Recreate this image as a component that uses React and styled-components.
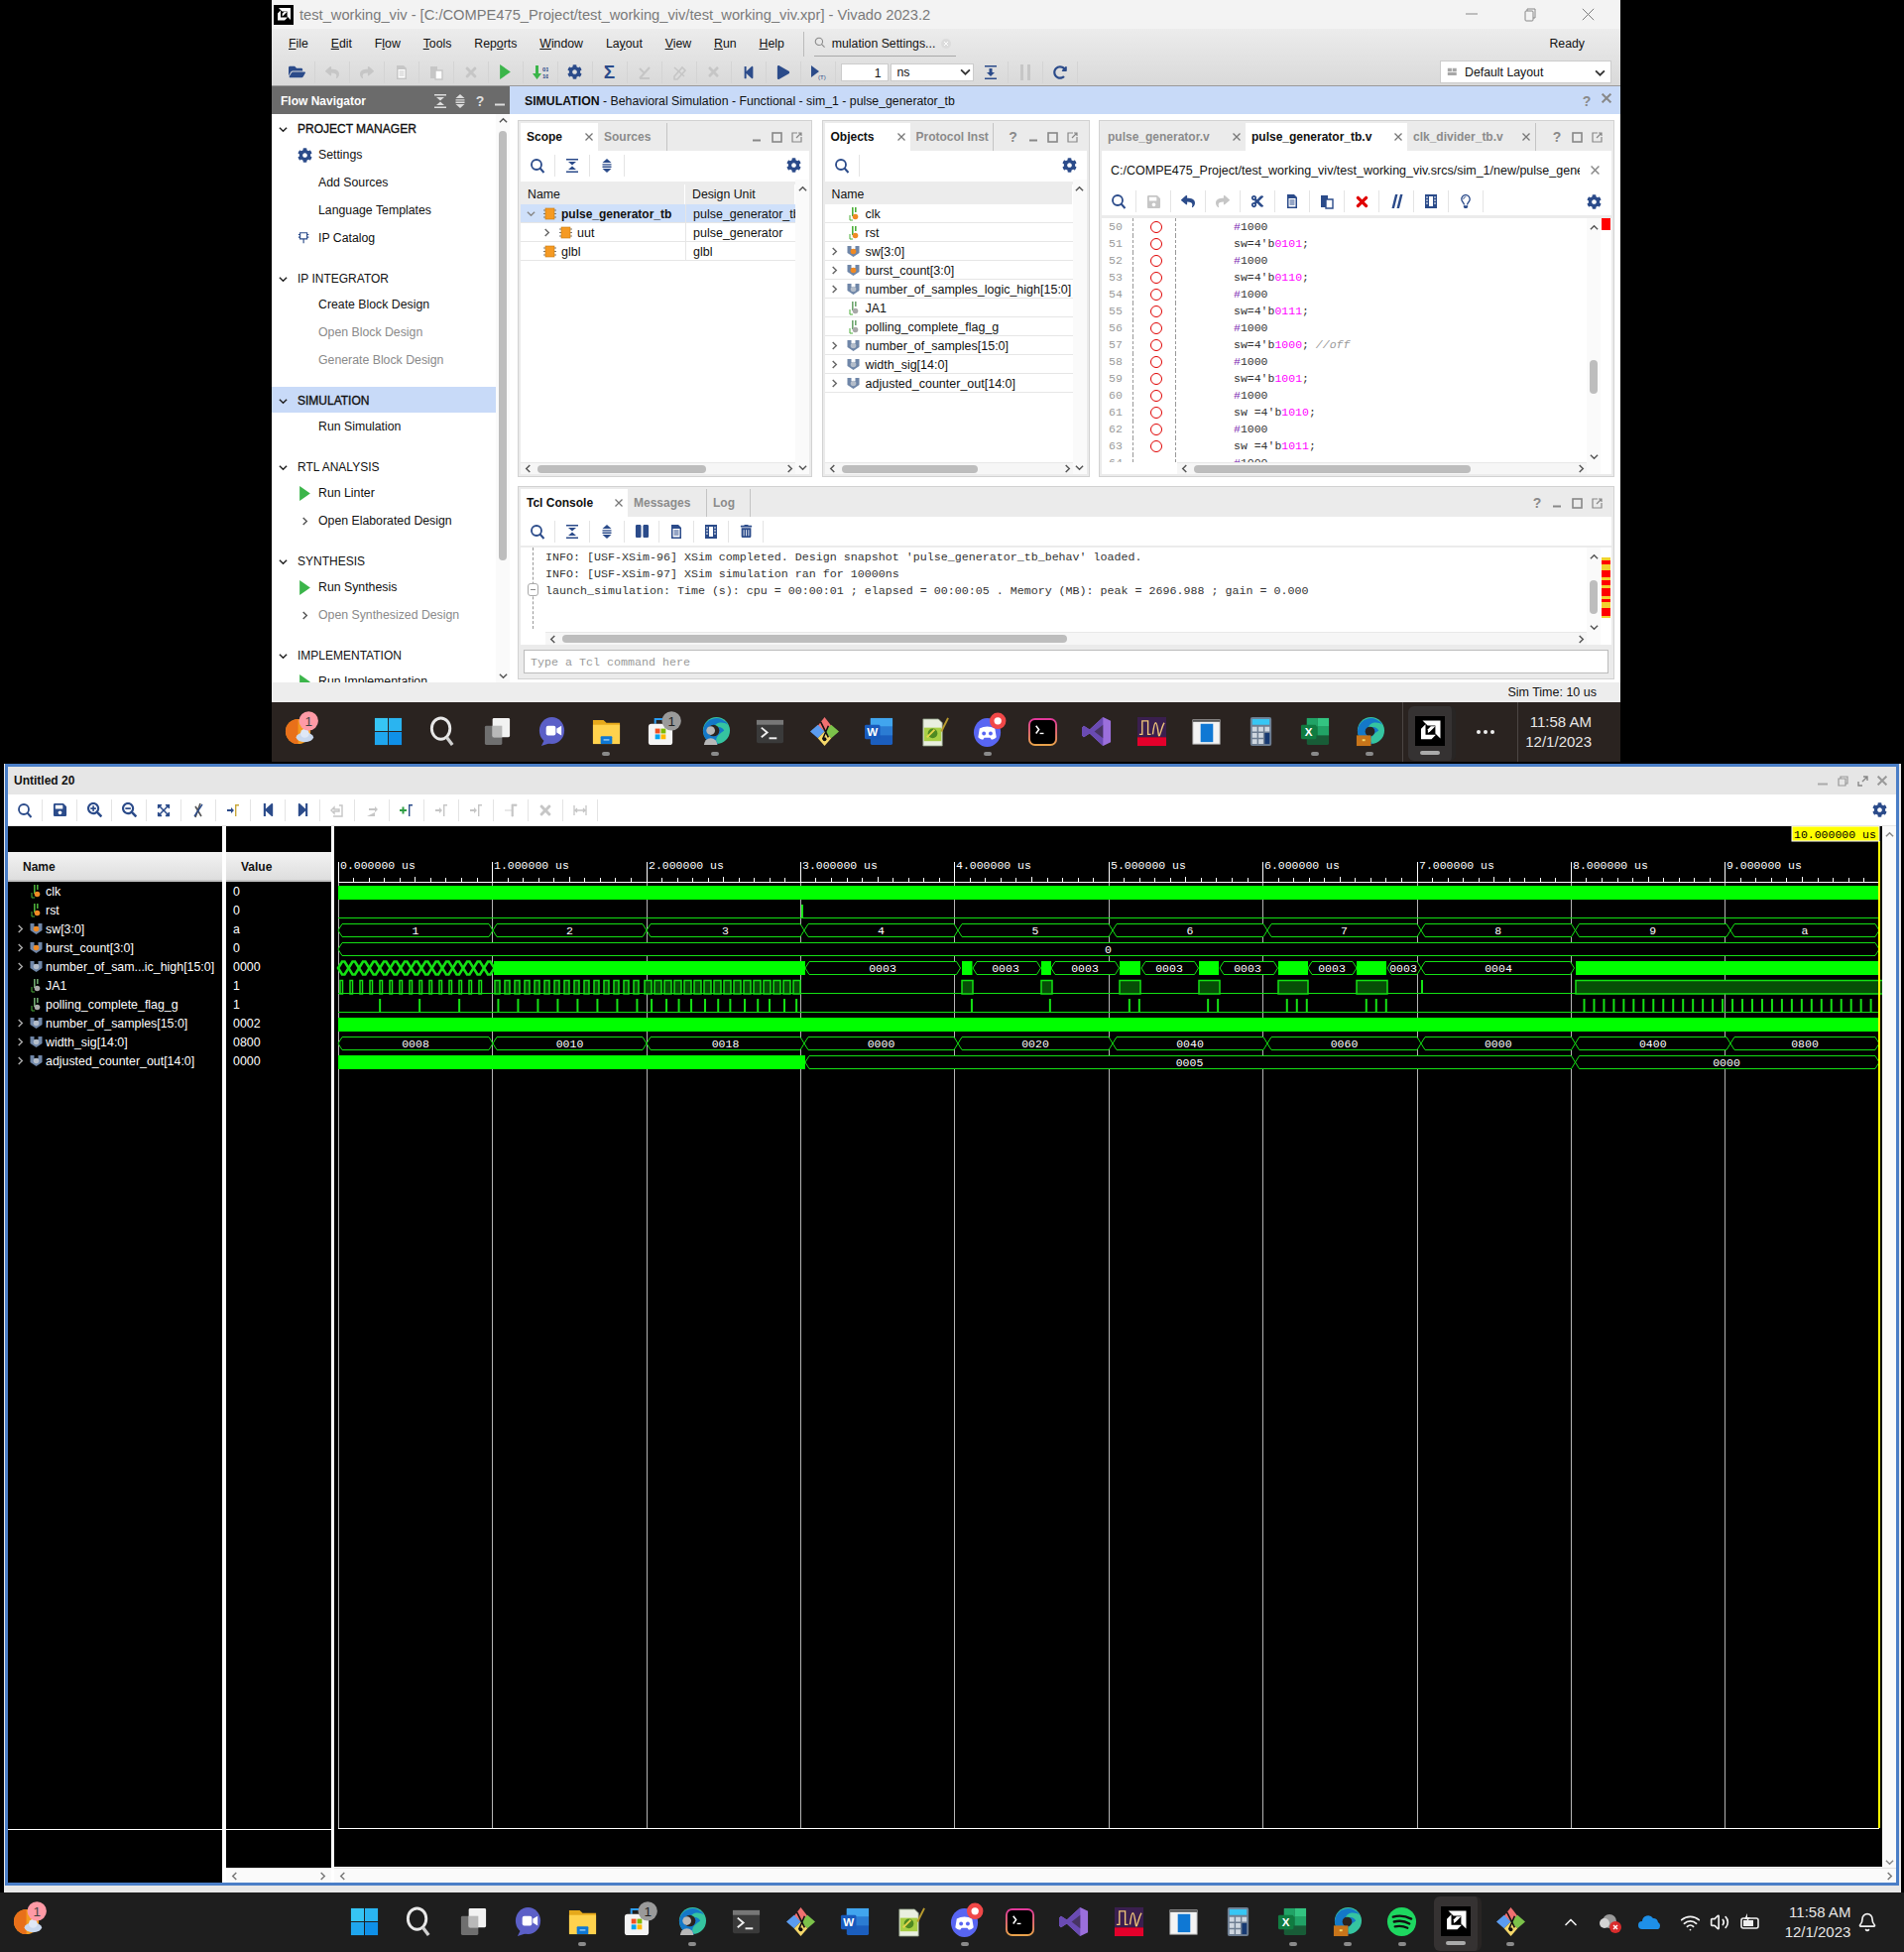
import React from "react";
import styled, { createGlobalStyle } from "styled-components";
import {
  FaCog, FaReply, FaShare, FaTimes, FaCut, FaSave, FaStepBackward, FaStepForward, FaPlay, FaPause,
  FaRedoAlt, FaTrashAlt, FaRegLightbulb, FaSearchPlus, FaSearchMinus, FaExpandArrowsAlt, FaFolderOpen,
} from "react-icons/fa";
import { ChevronUp, Wifi, Volume2, Bell } from "lucide-react";

const NAVY = "#2b4b8a";
const DIS = "#c6c6c6";
const UI = '"Liberation Sans", Arial, sans-serif';
const MONO = '"Liberation Mono", monospace';

const Global = createGlobalStyle`
  html, body { margin: 0; padding: 0; background: #000; }
  body { width: 1920px; height: 1968px; overflow: hidden; font-family: ${UI}; font-size: 12.3px; color: #111; }
  * { box-sizing: border-box; }
`;

const Page = styled.div`
  width: 1920px;
  height: 1968px;
  background: #000;
  display: flex;
  flex-direction: column;
`;

/* ---------- top window ---------- */
const TopWindow = styled.div`
  margin-left: 274px;
  width: 1360px;
  height: 708px;
  background: #ededed;
  display: flex;
  flex-direction: column;
`;
const TitleBar = styled.div`
  height: 29px;
  background: #f3f3f3;
  display: flex;
  align-items: center;
  padding-left: 2px;
`;
const TitleText = styled.span`
  margin-left: 6px;
  color: #7a7a7a;
  font-size: 14.7px;
  white-space: nowrap;
`;
const WinControls = styled.div`
  margin-left: auto;
  display: flex;
  padding-right: 3px;
  color: #777;
`;
const WinBtn = styled.span`
  width: 59px;
  display: flex;
  justify-content: center;
`;
const ChromeArea = styled.div`
  height: 58px;
  background: linear-gradient(#ececec, #d9d9d9);
  border-bottom: 1px solid #9a9a9a;
`;
const MenuRow = styled.div`
  height: 30px;
  display: flex;
  align-items: center;
  padding-left: 17px;
`;
const MenuItem = styled.span`
  margin-right: 22.9px;
  white-space: nowrap;
`;
const QuickSearch = styled.div`
  margin-left: -4px;
  width: 154px;
  height: 25px;
  border-left: 1px solid #bbb;
  padding-left: 10px;
  display: flex;
  align-items: center;
  justify-content: space-between;
`;
const QuickInner = styled.div`
  width: 143px;
  height: 25px;
  border-bottom: 1px solid #a9a9a9;
  display: flex;
  align-items: center;
  gap: 5px;
  white-space: nowrap;
`;
const ReadyText = styled.span`
  margin-left: auto;
  padding-right: 36px;
`;
const ToolRow = styled.div`
  height: 27px;
  display: flex;
  align-items: center;
  padding-left: 8.5px;
`;
const ToolCell = styled.span`
  width: 35px;
  height: 22px;
  flex: none;
  display: flex;
  align-items: center;
  justify-content: center;
  border-right: ${(p) => (p.$sep === false ? "none" : `1px solid ${p.$line || "#e4e4e4"}`)};
`;
const StepInput = styled.div`
  width: 48px;
  height: 18px;
  margin-left: 5px;
  background: #fff;
  border: 1px solid #ccc;
  text-align: right;
  padding: 2px 6px 0 0;
`;
const UnitSelect = styled.div`
  width: 84px;
  height: 18px;
  margin-left: 2px;
  background: #fff;
  border: 1px solid #ccc;
  display: flex;
  align-items: center;
  justify-content: space-between;
  padding: 0 2px 0 6px;
`;
const LayoutSelect = styled.div`
  margin-left: auto;
  margin-right: 9px;
  width: 173px;
  height: 23px;
  background: #fff;
  border: 1px solid #ccc;
  display: flex;
  align-items: center;
  gap: 5px;
  padding: 1px 5px 0 6px;
`;
const BodyRow = styled.div`
  flex: 1;
  display: flex;
  min-height: 0;
`;

/* flow navigator */
const FlowNav = styled.div`
  width: 240px;
  flex: none;
  display: flex;
  flex-direction: column;
  background: #fff;
`;
const GreyHeader = styled.div`
  height: 28px;
  flex: none;
  background: #6b6b6b;
  color: #fff;
  font-weight: 700;
  font-size: 12px;
  display: flex;
  align-items: center;
  padding: 2px 0 0 9px;
`;
const HeaderTools = styled.div`
  margin-left: auto;
  display: flex;
  color: #ddd;
  font-size: 14px;
`;
const HeaderTool = styled.span`
  width: 20px;
  display: flex;
  justify-content: center;
  align-items: center;
`;
const NavBody = styled.div`
  flex: 1;
  display: flex;
  min-height: 0;
`;
const NavList = styled.div`
  flex: 1;
  overflow: hidden;
  padding-top: 1px;
`;
const NavSection = styled.div`
  margin-bottom: 13px;
`;
const NavHead = styled.div`
  height: 26px;
  padding-top: 2px;
  display: flex;
  align-items: center;
  background: ${(p) => (p.$active ? "#c8daf8" : "transparent")};
  font-size: 12px;
  -webkit-text-stroke: ${(p) => (p.$bold ? "0.35px #111" : "0")};
  white-space: nowrap;
`;
const NavChev = styled.span`
  width: 22px;
  display: flex;
  justify-content: center;
  margin-right: 4px;
`;
const NavItem = styled.div`
  height: 28px;
  display: flex;
  align-items: center;
  padding-left: 24px;
  color: ${(p) => (p.$off ? "#8a8a8a" : "#111")};
  white-space: nowrap;
`;
const NavIcon = styled.span`
  width: 18px;
  margin-right: 5px;
  display: flex;
  justify-content: center;
`;
const VStrip = styled.div`
  width: ${(p) => p.$w || 14}px;
  flex: none;
  position: relative;
  background: ${(p) => p.$bg || "#fafafa"};
  display: flex;
  flex-direction: column;
  justify-content: space-between;
  align-items: center;
  padding: ${(p) => p.$pad || "2px 0"};
`;
const Thumb = styled.div`
  position: absolute;
  left: 3px;
  width: 8px;
  border-radius: 4px;
  background: #bdbdbd;
  top: ${(p) => p.$top}px;
  height: ${(p) => p.$h}px;
`;

/* main pane */
const MainPane = styled.div`
  flex: 1;
  min-width: 0;
  display: flex;
  flex-direction: column;
  background: #fff;
`;
const BlueHeader = styled.div`
  height: 28px;
  flex: none;
  background: #c8daf8;
  display: flex;
  align-items: center;
  padding: 2px 0 0 15px;
  white-space: nowrap;
`;
const HeaderRight = styled.div`
  margin-left: auto;
  padding-right: 4px;
  display: flex;
  color: #7a7a7a;
  font-weight: 700;
  font-size: 15px;
`;
const Panes = styled.div`
  flex: 1;
  display: grid;
  grid-template-columns: 297px 270px 520px;
  grid-template-rows: 360px 195px;
  column-gap: 9.5px;
  row-gap: 9px;
  padding: 6px 6px 3px 8px;
`;
const Panel = styled.div`
  min-width: 0;
  min-height: 0;
  grid-column: ${(p) => p.$span || "auto"};
  display: flex;
  flex-direction: column;
  background: #ebebeb;
  border: 1px solid #d2d2d2;
  padding: 2px;
  overflow: hidden;
`;
const TabStrip = styled.div`
  height: 28px;
  flex: none;
  display: flex;
  background: #ebebeb;
`;
const Tab = styled.div`
  width: ${(p) => p.$w}px;
  flex: none;
  height: 28px;
  display: flex;
  align-items: center;
  justify-content: space-between;
  padding: 0 5px 0 6px;
  font-weight: 700;
  font-size: 12px;
  white-space: nowrap;
  overflow: hidden;
  background: ${(p) => (p.$active ? "#fff" : "#ebebeb")};
  color: ${(p) => (p.$active ? "#111" : "#8b8b8b")};
  border-right: ${(p) => (p.$sep ? "1px solid #c4c4c4" : "none")};
`;
const TabTools = styled.div`
  margin-left: auto;
  display: flex;
  align-items: center;
  padding-right: ${(p) => p.$pr || 4}px;
`;
const TabTool = styled.span`
  width: 20px;
  display: flex;
  justify-content: center;
  color: #8a8a8a;
  font-weight: 700;
  font-size: 14px;
`;
const PanelTools = styled.div`
  height: ${(p) => p.$h || 29}px;
  flex: none;
  background: #fff;
  display: flex;
  align-items: center;
  padding-right: ${(p) => p.$pr || 8}px;
  border-bottom: ${(p) => p.$bb || 0}px solid #ebebeb;
`;
const RightGear = styled.span`
  margin-left: auto;
  display: flex;
`;
const PanelBody = styled.div`
  flex: 1;
  min-height: 0;
  display: flex;
  background: #fff;
`;
const TableCol = styled.div`
  flex: 1;
  min-width: 0;
  display: flex;
  flex-direction: column;
`;
const TreeArea = styled.div`
  flex: 1;
  min-height: 0;
  margin-top: 2px;
  overflow: hidden;
`;
const TreeHead = styled.div`
  height: 23px;
  background: #ececec;
  display: grid;
  grid-template-columns: ${(p) => p.$cols};
  align-items: center;
  padding-top: 3px;
  white-space: nowrap;
`;
const HeadCell = styled.span`
  padding-left: 7px;
  height: 100%;
  display: flex;
  align-items: center;
  border-right: 1px solid #fff;
`;
const TreeRow = styled.div`
  height: 19px;
  display: grid;
  grid-template-columns: ${(p) => p.$cols};
  background: ${(p) => (p.$sel ? "#cfe0fa" : "#fff")};
  border-bottom: 1px solid #e6e6e6;
  font-size: 12.5px;
  white-space: nowrap;
  overflow: hidden;
`;
const NameCell = styled.div`
  display: flex;
  align-items: center;
  padding: 1px 0 0 ${(p) => p.$indent || 0}px;
  font-weight: ${(p) => (p.$bold ? 700 : 400)};
  font-size: ${(p) => (p.$bold ? "12px" : "inherit")};
  overflow: hidden;
`;
const ValueCell = styled.div`
  display: flex;
  align-items: center;
  padding: 1px 0 0 7px;
  border-left: 1px solid #e6e6e6;
  overflow: hidden;
`;
const Chev = styled.span`
  width: 20px;
  flex: none;
  display: flex;
  justify-content: center;
`;
const TreeIcon = styled.span`
  width: 14px;
  margin: 0 5px 0 2px;
  flex: none;
  display: flex;
  justify-content: center;
`;
const HScroll = styled.div`
  height: ${(p) => p.$h || 12}px;
  flex: none;
  margin-left: ${(p) => p.$ml || 0}px;
  background: #f6f6f6;
  border-top: 1px solid #e8e8e8;
  display: flex;
  align-items: center;
  padding: 0 1px 0 3px;
`;
const HThumb = styled.div`
  height: 8px;
  width: ${(p) => p.$w}px;
  margin-left: ${(p) => p.$ml}px;
  background: #bdbdbd;
  border-radius: 4px;
`;
const PushRight = styled.span`
  margin-left: auto;
  display: flex;
`;

/* editor */
const PathRow = styled.div`
  height: 37px;
  flex: none;
  background: #fff;
  display: flex;
  align-items: center;
  padding: 2px 12px 0 9px;
`;
const PathText = styled.span`
  flex: 1;
  overflow: hidden;
  white-space: nowrap;
  font-size: 12.5px;
  margin-right: 11px;
`;
const CodeArea = styled.div`
  flex: 1;
  min-height: 0;
  overflow: hidden;
  font-family: ${MONO};
  font-size: 11.5px;
  color: #333;
`;
const CodeLine = styled.div`
  height: 17px;
  display: grid;
  grid-template-columns: 31px 44px 58px 1fr;
  align-items: stretch;
  white-space: pre;
`;
const LineNo = styled.span`
  padding-left: 7px;
  color: #9a9a9a;
  line-height: 18px;
`;
const BreakCol = styled.span`
  border-left: 1px dashed #999;
  border-right: 1px dashed #999;
  display: flex;
  align-items: center;
  justify-content: center;
  padding-left: 4px;
`;
const BreakDot = styled.i`
  width: 12px;
  height: 12px;
  border: 1px solid #e00000;
  border-radius: 50%;
  display: block;
`;
const CodeText = styled.span`
  grid-column: 4;
  line-height: 18px;
`;
const Hash = styled.span`color: #7a1fb0;`;
const Digits = styled.span`color: #ff00ff;`;
const Comment = styled.span`color: #999; font-style: italic;`;
const MarkerStrip = styled.div`
  width: 11px;
  flex: none;
  padding-top: ${(p) => p.$top}px;
  padding-left: 1px;
  padding-right: 1px;
`;
const Marker = styled.div`
  height: ${(p) => p.$h}px;
  background: ${(p) => p.$c};
`;

/* console */
const ConsoleLines = styled.div`
  flex: 1;
  min-height: 0;
  display: flex;
  font-family: ${MONO};
  font-size: 11.67px;
  color: #333;
`;
const FoldGutter = styled.div`
  width: 25px;
  flex: none;
  position: relative;
  &::before {
    content: "";
    position: absolute;
    left: 12px;
    top: 0;
    bottom: 3px;
    border-left: 1px dashed #999;
  }
`;
const FoldMark = styled.span`
  position: absolute;
  left: 7px;
  top: 36px;
  width: 11px;
  height: 13px;
  background: #fff;
  border: 1px solid #aaa;
  border-radius: 3px;
  &::after {
    content: "";
    position: absolute;
    left: 2px;
    right: 2px;
    top: 5px;
    border-top: 1px solid #888;
  }
`;
const ConsoleText = styled.div`
  padding-top: 2px;
`;
const ConsoleLine = styled.div`
  height: 17px;
  line-height: 17px;
  white-space: pre;
`;
const TclInput = styled.div`
  height: 24px;
  flex: none;
  margin: 5px 3px 3px 3px;
  background: #fff;
  border: 1px solid #bcbcbc;
  font-family: ${MONO};
  font-size: 11.67px;
  color: #999;
  line-height: 24px;
  padding-left: 6px;
`;
const StatusBar = styled.div`
  height: 20px;
  flex: none;
  background: #ededed;
  display: flex;
  align-items: center;
  justify-content: flex-end;
  padding-right: 24px;
  font-size: 12.5px;
`;

/* ---------- taskbars ---------- */
const Taskbar = styled.div`
  height: 60px;
  flex: none;
  display: flex;
  align-items: stretch;
  background: ${(p) => p.$bg};
  margin-left: ${(p) => p.$ml || 0}px;
  width: ${(p) => p.$width}px;
  color: #e6e6e6;
  position: relative;
`;
const TaskCell = styled.div`
  width: ${(p) => p.$w}px;
  margin-left: ${(p) => p.$ml || 0}px;
  flex: none;
  position: relative;
  display: flex;
  align-items: center;
  justify-content: center;
  padding-bottom: 1px;
`;
const RunDot = styled.i`
  position: absolute;
  left: 50%;
  bottom: 6px;
  width: ${(p) => p.$w || 8}px;
  height: 4px;
  margin-left: ${(p) => -(p.$w || 8) / 2}px;
  border-radius: 2px;
  background: ${(p) => p.$c || "#8a8a8a"};
`;
const ActiveCell = styled.div`
  width: 48px;
  margin: 4px 0 1px ${(p) => p.$ml}px;
  flex: none;
  position: relative;
  background: #353232;
  border-radius: 6px;
  border-right: 4px solid #282524;
  display: flex;
  align-items: center;
  justify-content: center;
  padding: 0 0 5px 0;
`;
const TaskSep = styled.div`
  width: 1px;
  background: #4b4644;
  margin-left: ${(p) => p.$ml || 0}px;
`;
const Clock = styled.div`
  flex: none;
  width: ${(p) => p.$w}px;
  padding: 0 ${(p) => p.$pr || 0}px 2px 0;
  display: flex;
  flex-direction: column;
  align-items: flex-end;
  justify-content: center;
  gap: 3px;
  font-size: 15px;
  line-height: 17px;
  white-space: nowrap;
`;

/* ---------- lower window ---------- */
const LowerFrame = styled.div`
  margin: 2px 0 0 4px;
  width: 1913px;
  height: 1138px;
  background: #e8e8e8;
  padding: 0 2px 7px 1px;
`;
const LowerWindow = styled.div`
  height: 100%;
  border: 3px solid #4a7ec7;
  display: flex;
  flex-direction: column;
  background: #fff;
`;
const WaveTitle = styled.div`
  height: 28px;
  flex: none;
  background: #e6e6e6;
  display: flex;
  align-items: center;
  padding-left: 6px;
  font-weight: 700;
  font-size: 12px;
`;
const WaveWinTools = styled.div`
  margin-left: auto;
  display: flex;
  padding-right: 4px;
`;
const WaveToolbar = styled.div`
  height: 32px;
  flex: none;
  background: #fff;
  border-bottom: 1px solid #e6e6e6;
  display: flex;
  align-items: center;
  padding-right: 9px;
`;
const WaveBody = styled.div`
  flex: 1;
  min-height: 0;
  display: flex;
  background: #fff;
`;
const SignalCol = styled.div`
  width: ${(p) => p.$w}px;
  margin-left: ${(p) => p.$ml || 0}px;
  flex: none;
  display: flex;
  flex-direction: column;
  background: #000;
  color: #fff;
`;
const ColGap = styled.div`
  height: 26px;
  flex: none;
`;
const ColHead = styled.div`
  height: 30px;
  flex: none;
  background: linear-gradient(#f2f2f2, #dedede);
  border-bottom: 2px solid #c4c4c4;
  color: #111;
  font-weight: 700;
  font-size: 12px;
  display: flex;
  align-items: center;
  padding: 2px 0 0 ${(p) => p.$pl}px;
`;
const ColRows = styled.div`
  flex: 1;
  border-bottom: 1px solid #fff;
`;
const SigRow = styled.div`
  height: 19px;
  display: flex;
  align-items: center;
  padding-left: 2px;
  font-size: 12.4px;
  white-space: nowrap;
`;
const SigIcon = styled.span`
  width: 14px;
  margin: 0 3px 0 -1px;
  display: flex;
  justify-content: center;
`;
const ValRow = styled.div`
  height: 19px;
  line-height: 20px;
  padding-left: 7px;
  font-size: 12.4px;
`;
const ColFoot = styled.div`
  height: ${(p) => p.$h}px;
  flex: none;
`;
const ColScroll = styled.div`
  height: 15px;
  flex: none;
  background: #fafafa;
  border-top: 1px solid #e4e4e4;
  display: flex;
  align-items: center;
  justify-content: space-between;
  padding: 0 4px;
`;
const WaveCol = styled.div`
  flex: 1;
  min-width: 0;
  margin-left: 3px;
  display: flex;
  flex-direction: column;
`;
const WaveMain = styled.div`
  flex: 1;
  min-height: 0;
  display: flex;
`;
const WaveSvg = styled.svg`
  flex: none;
  display: block;
  background: #000;
`;
const WaveScroll = styled.div`
  height: 15px;
  flex: none;
  background: #fafafa;
  border-top: 1px solid #e4e4e4;
  display: flex;
  align-items: center;
  justify-content: space-between;
  padding: 0 2px 0 4px;
`;

/* ---------- tray ---------- */
const TrayCell = styled.div`
  width: ${(p) => p.$w}px;
  margin-left: ${(p) => p.$ml || 0}px;
  flex: none;
  display: flex;
  align-items: center;
  justify-content: center;
  color: #f0f0f0;
`;

/* ---------- small glyph helpers ---------- */
const Arrow = ({ dir = "right", c = "#555", s = 9 }) => {
  const d = { right: "M3 1l4 4-4 4", left: "M7 1L3 5l4 4", up: "M1 7l4-4 4 4", down: "M1 3l4 4 4-4" }[dir];
  return (
    <svg width={s} height={s} viewBox="0 0 10 10"><path d={d} fill="none" stroke={c} strokeWidth="1.6" /></svg>
  );
};
const X = ({ c = "#777", s = 8, w = 1.3 }) => (
  <svg width={s} height={s} viewBox="0 0 8 8"><path d="M.5.5l7 7M7.5.5l-7 7" stroke={c} strokeWidth={w} /></svg>
);
const Ic = ({ children, s = 16 }) => <svg width={s} height={s} viewBox="0 0 16 16">{children}</svg>;

const SearchIc = () => (
  <Ic>
    <circle cx="7" cy="7" r="5" fill="none" stroke={NAVY} strokeWidth="1.8" />
    <path d="M10.5 10.5l4 4.5" stroke={NAVY} strokeWidth="2" />
  </Ic>
);
const CollapseIc = ({ c = NAVY }) => (
  <Ic><path fill={c} d="M2 1h12v1.4H2zM4 4h8L8 7.6zM8 8.4L12 12H4zM2 13.6h12V15H2z" /></Ic>
);
const ExpandIc = ({ c = NAVY }) => (
  <Ic><path fill={c} d="M8 1l4.5 4h-9zM3.5 6.2h9v1.4h-9zM3.5 8.6h9V10h-9zM3.5 11h9L8 15z" /></Ic>
);
const DocIc = ({ c = NAVY }) => (
  <Ic>
    <path d="M3 1h7l3 3v11H3z" fill={c} />
    <path d="M4.5 5h7v8.5h-7z" fill="#fff" />
    <path d="M5.5 7h5M5.5 9h5M5.5 11h5" stroke={c} strokeWidth="1" />
  </Ic>
);
const PasteIc = ({ c = NAVY }) => (
  <Ic>
    <path d="M2 2h7v12H2z" fill={c} />
    <path d="M7 6h7v9H7z" fill="#fff" stroke={c} strokeWidth="1.4" />
  </Ic>
);
const ColumnsIc = () => (
  <Ic>
    <path d="M2 1h12v14H2z" fill={NAVY} />
    <path d="M6 3h4v10H6z" fill="#fff" />
    <path d="M3 4h2M3 7h2M3 10h2M11 4h2M11 7h2M11 10h2" stroke="#fff" strokeWidth="1" />
  </Ic>
);
const SlashIc = () => (
  <Ic><path d="M7 1h2.5L6 15H3.5zM12 1h2.5L11 15H8.5z" fill={NAVY} /></Ic>
);
const Play = ({ c = "#3bb54a", s = 14 }) => (
  <svg width={s} height={s} viewBox="0 0 12 14"><path d="M1 0l10 7-10 7z" fill={c} /></svg>
);
const Gear = () => <FaCog size={15} color={NAVY} />;
const BarMark = ({ c = NAVY, dis }) => (
  <Ic>
    <path d="M10 2h4v1.4h-2.6V14H10z" fill={dis ? DIS : "#c9a83a"} />
    <path d="M2 7h4V5l3 3-3 3V9H2z" fill={dis ? DIS : c} />
  </Ic>
);
const TabIcons = ({ help = true, min = true }) => (
  <>
    {help && <TabTool>?</TabTool>}
    {min && <TabTool><svg width="12" height="10"><path d="M2 8.5h8" stroke="#888" strokeWidth="2" /></svg></TabTool>}
    <TabTool><svg width="11" height="11"><rect x="1" y="1" width="9" height="9" fill="none" stroke="#888" strokeWidth="1.6" /></svg></TabTool>
    <TabTool><svg width="11" height="11"><path d="M6 1H1v9h9V5M5 6l5-5M7 1h3v3" fill="none" stroke="#888" strokeWidth="1.2" /></svg></TabTool>
  </>
);

const ModuleIc = () => (
  <svg width="13" height="13" viewBox="0 0 13 13">
    <path d="M0 3h13M0 6.5h13M0 10h13" stroke="#777" strokeWidth="1" />
    <rect x="2" y="1" width="9" height="11" fill="#f59a23" stroke="#c77a10" strokeWidth=".6" />
  </svg>
);
const SigIc = ({ bus, grey }) =>
  bus ? (
    <svg width="13" height="13" viewBox="0 0 12 13">
      <path d="M0 1h4v3h4V1h4v7l-6 4-6-4z" fill="#6f86a8" />
      <circle cx="6" cy="6.5" r="2.8" fill={grey ? "#b4bdca" : "#f08a24"} />
    </svg>
  ) : (
    <svg width="12" height="14" viewBox="0 0 12 14">
      <path d="M4 0h1.6v9H4zM7 0h1.6v5H7z" fill={grey ? "#6ea66e" : "#4caf3a"} />
      <path d="M2 8v5h3" fill="none" stroke="#4caf3a" strokeWidth="1" />
      <circle cx="7.5" cy="9.5" r="2.8" fill={grey ? "#a9a9a9" : "#f08a24"} />
    </svg>
  );

/* ---------- taskbar icons ---------- */
const AmdLogo = ({ s = 30 }) => (
  <svg width={s} height={s} viewBox="0 0 20 20">
    <rect width="20" height="20" fill="#000" />
    <path fill="#fff" d="M5 3h12v12l-3.4-3.4V6.4H8.4zM4 8.5l3-3v7h7l-3 3H4z" />
    <path fill="#fff" d="M8.6 11.4V8.8l2-2h3l-3.5 3.5z" />
  </svg>
);
const Badge = ({ c, x, n, tc = "#444" }) => (
  <>
    <circle cx={x} cy="5" r="10" fill={c} />
    <text x={x} y="10" textAnchor="middle" fontSize="14" fill={tc} fontFamily="Liberation Sans">{n}</text>
  </>
);
const TaskIcon = ({ name }) => {
  const body = {
    weather: (
      <>
        <circle cx="14" cy="16" r="13" fill="#f49a1f" />
        <path d="M14 3a13 13 0 0 0 0 26z" fill="#e8701a" />
        <ellipse cx="21" cy="22" rx="9" ry="5" fill="#c9d8ee" />
        <circle cx="21" cy="18" r="4.5" fill="#dfe8f6" />
        <Badge c="#ff9aa6" x={25} n="1" />
      </>
    ),
    windows: (
      <>
        <rect x="2" y="2" width="13.5" height="13.5" fill="#36c5f4" />
        <rect x="16.5" y="2" width="13.5" height="13.5" fill="#2ab4f0" />
        <rect x="2" y="16.5" width="13.5" height="13.5" fill="#1fa6ee" />
        <rect x="16.5" y="16.5" width="13.5" height="13.5" fill="#0f90e8" />
      </>
    ),
    search: (
      <>
        <ellipse cx="14" cy="13" rx="9.5" ry="11" fill="none" stroke="#e8e8e8" strokeWidth="3" />
        <path d="M20 22l6 8" stroke="#cfcfcf" strokeWidth="3.4" />
      </>
    ),
    taskview: (
      <>
        <rect x="3" y="10" width="18" height="20" rx="1.5" fill="#6f6f6f" />
        <rect x="11" y="2" width="18" height="20" rx="1.5" fill="#f2f2f2" />
        <rect x="11" y="10" width="10" height="12" fill="#b9b9b9" />
      </>
    ),
    teams: (
      <>
        <ellipse cx="16" cy="15" rx="13" ry="14" fill="#5b5fc7" />
        <path d="M8 25l-3 6 9-3z" fill="#5b5fc7" />
        <rect x="10" y="10" width="10" height="10" rx="2" fill="#fff" />
        <path d="M21 13l5-3v10l-5-3z" fill="#fff" />
      </>
    ),
    explorer: (
      <>
        <path d="M2 4h11l3 3h14v21H2z" fill="#e6a91b" />
        <rect x="2" y="9" width="28" height="20" fill="#ffd24d" />
        <rect x="10" y="21" width="12" height="8" rx="1" fill="#0f78d4" />
        <rect x="13" y="24" width="6" height="1.4" fill="#9fd0f7" />
      </>
    ),
    store: (
      <>
        <path d="M10 8V3h11v5" fill="none" stroke="#2a9df4" strokeWidth="2" />
        <rect x="3" y="8" width="25" height="22" rx="3" fill="#f4f4f4" />
        <rect x="10" y="13" width="5" height="5" fill="#f25022" />
        <rect x="16" y="13" width="5" height="5" fill="#7fba00" />
        <rect x="10" y="19" width="5" height="5" fill="#00a4ef" />
        <rect x="16" y="19" width="5" height="5" fill="#ffb900" />
        <Badge c="#9a9a9a" x={27} n="1" tc="#222" />
      </>
    ),
    edge: (
      <>
        <circle cx="17" cy="15" r="14" fill="#35c4a0" />
        <path d="M3 15a14 14 0 0 1 26-6c-5-4-14-3-15 4 5-3 9-2 11 2-4 3-12 8-6 14A14 14 0 0 1 3 15z" fill="#1478c8" />
        <circle cx="14" cy="15" r="6" fill="#2a2320" />
        <circle cx="11" cy="15" r="4.5" fill="#b8b8b8" />
        <path d="M4 30a7 7 0 0 1 14 0z" fill="#b8b8b8" />
      </>
    ),
    terminal: (
      <>
        <rect x="2" y="4" width="28" height="24" rx="2" fill="#3a3a3a" />
        <rect x="2" y="4" width="28" height="5" fill="#777" />
        <path d="M7 12l6 5-6 5" fill="none" stroke="#eee" strokeWidth="2" />
        <path d="M15 23h8" stroke="#eee" strokeWidth="2" />
      </>
    ),
    git: (
      <>
        <path d="M16 1L9 10l7 6 7-6z" fill="#f07070" />
        <path d="M1 16l8-7 7 7-7 7z" fill="#5b9cf0" />
        <path d="M31 16l-8-7-7 7 7 7z" fill="#7cc24a" />
        <path d="M16 31l-7-8 7-7 7 7z" fill="#f4d76a" />
        <path d="M12 6l8 16M20 10l-6 14" stroke="#111" strokeWidth="1.6" />
        <circle cx="16" cy="24" r="2" fill="#111" />
      </>
    ),
    word: (
      <>
        <rect x="7" y="2" width="23" height="28" rx="1.5" fill="#1b5ebe" />
        <rect x="7" y="2" width="23" height="9" fill="#41a5ee" />
        <rect x="7" y="11" width="23" height="9" fill="#2b7cd3" />
        <rect x="1" y="9" width="16" height="15" rx="1.5" fill="#185abd" />
        <text x="9" y="21" textAnchor="middle" fontSize="12" fontWeight="700" fill="#fff" fontFamily="Liberation Sans">W</text>
      </>
    ),
    notepad: (
      <>
        <path d="M5 3h16l4 4v24H5z" fill="#e9efe0" stroke="#8a9a80" strokeWidth=".8" />
        <path d="M6 12h18v14H6z" fill="#a8cf45" />
        <circle cx="15" cy="18" r="5" fill="#4f8a22" />
        <path d="M9 22l8-8" stroke="#e7d44a" strokeWidth="2" />
        <path d="M24 16L31 2" stroke="#b89b2e" strokeWidth="2" />
      </>
    ),
    discord: (
      <>
        <ellipse cx="15" cy="17" rx="14" ry="15" fill="#5865f2" />
        <path d="M7 13c5-3 11-3 16 0l1.5 9c-2 2-4 2.5-5 2.5l-1.5-2h-6l-1.5 2c-1 0-3-.5-5-2.5z" fill="#fff" />
        <circle cx="11.5" cy="18" r="2" fill="#5865f2" />
        <circle cx="18.5" cy="18" r="2" fill="#5865f2" />
        <circle cx="26" cy="5" r="8.5" fill="#f04848" />
        <circle cx="26" cy="5" r="3.8" fill="#fff" />
      </>
    ),
    wt: (
      <>
        <rect x="2" y="3" width="28" height="27" rx="6" fill="#000" stroke="url(#wtg)" strokeWidth="2" />
        <defs>
          <linearGradient id="wtg" x1="0" y1="0" x2="0" y2="1">
            <stop offset="0" stopColor="#e0389a" />
            <stop offset="1" stopColor="#e8a24a" />
          </linearGradient>
        </defs>
        <path d="M9 10l3 4-3 4" fill="none" stroke="#fff" strokeWidth="1.6" />
        <path d="M13 18h4" stroke="#fff" strokeWidth="1.4" />
      </>
    ),
    vs: (
      <>
        <path d="M22 1l8 4v22l-8 4-14-13-6 4-2-2V12l2-2 6 4z" fill="#9b6fdc" />
        <path d="M22 1L8 14 2 10l-2 2v8l2 2 6-4 14 13z" fill="#6a4bb3" />
        <path d="M22 9v14l-9-7z" fill="#2a2320" opacity=".55" />
      </>
    ),
    ltspice: (
      <>
        <rect x="1" y="1" width="30" height="21" fill="#3a1f4f" />
        <rect x="1" y="22" width="30" height="9" fill="#e4002b" />
        <path d="M3 19h3V5h6v14h3" fill="none" stroke="#f2c77a" strokeWidth="1.4" />
        <path d="M17 19c2-16 4-16 6 0 1 6 3-8 6-12" fill="none" stroke="#f2c77a" strokeWidth="1.4" />
      </>
    ),
    window: (
      <>
        <rect x="2" y="4" width="28" height="25" fill="#f4f4f4" stroke="#bbb" />
        <rect x="10" y="8" width="13" height="19" fill="#0f78d4" />
        <rect x="2" y="4" width="28" height="2" fill="#555" />
      </>
    ),
    calc: (
      <>
        <rect x="5" y="1" width="22" height="30" rx="2" fill="#6f7f93" />
        <rect x="7" y="3" width="18" height="6" fill="#37c6f4" />
        <path fill="#cfd7e0" d="M7 11h5v5H7zM13.5 11h5v5h-5zM20 11h5v5h-5zM7 17.5h5v5H7zM13.5 17.5h5v5h-5zM7 24h5v5H7zM13.5 24h5v5h-5z" />
        <rect x="20" y="17.5" width="5" height="11.5" fill="#173a72" />
      </>
    ),
    excel: (
      <>
        <rect x="7" y="2" width="23" height="28" rx="1.5" fill="#185c37" />
        <rect x="18" y="2" width="12" height="9" fill="#33c481" />
        <rect x="7" y="2" width="11" height="9" fill="#21a366" />
        <rect x="18" y="11" width="12" height="9" fill="#21a366" />
        <rect x="7" y="11" width="11" height="9" fill="#107c41" />
        <rect x="1" y="9" width="16" height="15" rx="1.5" fill="#107c41" />
        <text x="9" y="21" textAnchor="middle" fontSize="12" fontWeight="700" fill="#fff" fontFamily="Liberation Sans">X</text>
      </>
    ),
    edgedev: (
      <>
        <circle cx="17" cy="15" r="14" fill="#35c4a0" />
        <path d="M3 15a14 14 0 0 1 26-6c-5-4-14-3-15 4 5-3 9-2 11 2-4 3-12 8-6 14A14 14 0 0 1 3 15z" fill="#1478c8" />
        <circle cx="16" cy="16" r="5" fill="#2a2320" />
        <rect x="2" y="20" width="15" height="11" fill="#c8751a" />
        <rect x="8" y="24" width="3" height="2" fill="#f4d76a" />
      </>
    ),
    spotify: (
      <>
        <circle cx="16" cy="16" r="15" fill="#1ed760" />
        <path d="M7 11c7-2 13-1 19 2M8 16c6-1.500 11-1 16 2M9 21c5-1 9-.5 13 1.500" fill="none" stroke="#111" strokeWidth="2.400" strokeLinecap="round" />
      </>
    ),
  }[name];
  return <svg width="31" height="31" viewBox="0 0 32 32" style={{ overflow: "visible" }}>{body}</svg>;
};

const TOP_APPS = [
  ["windows"], ["search"], ["taskview"], ["teams"], ["explorer", 1], ["store"], ["edge", 1], ["terminal"], ["git"], ["word"],
  ["notepad"], ["discord", 1], ["wt"], ["vs"], ["ltspice"], ["window"], ["calc"], ["excel", 1], ["edgedev", 1],
];
const BOTTOM_APPS = [...TOP_APPS, ["spotify", 1]];

const TaskApps = ({ apps, w }) =>
  apps.map(([name, run]) => (
    <TaskCell key={name} $w={w}>
      <TaskIcon name={name} />
      {run && <RunDot />}
    </TaskCell>
  ));

/* ---------- tool rows data ---------- */
const mainTools = [
  <FaFolderOpen key="f" size={17} color={NAVY} />,
  <FaReply key="u" size={14} color={DIS} />,
  <FaShare key="r" size={14} color={DIS} />,
  <DocIc key="c" c={DIS} />,
  <PasteIc key="p" c={DIS} />,
  <FaTimes key="x" size={16} color={DIS} />,
  <Play key="g" s={15} />,
  <svg width="16" height="16" viewBox="0 0 16 16" key="st">
    <path d="M3 1h3v8h3l-4.500 6L0 9h3z" fill="#3bb54a" />
    <text x="10" y="7" fontSize="6" fontWeight="700" fill={NAVY} fontFamily="Liberation Sans">01</text>
    <text x="10" y="14" fontSize="6" fontWeight="700" fill={NAVY} fontFamily="Liberation Sans">10</text>
  </svg>,
  <Gear key="gr" />,
  <span key="s" style={{ color: NAVY, fontSize: 19, fontWeight: 700, lineHeight: 1 }}>Σ</span>,
  <Ic key="d1"><path d="M3 14L13 3M3 4l4 4M3 14h10" stroke={DIS} strokeWidth="2" fill="none" /></Ic>,
  <Ic key="d2"><path d="M3 12l8-9 3 3-8 9H3zM13 12L3 3" stroke={DIS} strokeWidth="1.6" fill="none" /></Ic>,
  <FaTimes key="d3" size={15} color={DIS} />,
  <FaStepBackward key="pv" size={14} color={NAVY} />,
  <FaPlay key="pl" size={14} color={NAVY} />,
  <Ic key="pt"><path d="M1 1l8 6-8 6z" fill={NAVY} /><text x="8" y="15" fontSize="6" fill={NAVY} fontFamily="Liberation Sans">(T)</text></Ic>,
];
const waveTools = [
  <SearchIc key="s" />,
  <FaSave key="sv" size={15} color={NAVY} />,
  <FaSearchPlus key="zi" size={15} color={NAVY} />,
  <FaSearchMinus key="zo" size={15} color={NAVY} />,
  <FaExpandArrowsAlt key="fit" size={14} color={NAVY} />,
  <Ic key="cut"><path d="M10 1L5 15M5 4l6 10" stroke="#555" strokeWidth="1.6" fill="none" /><path d="M12 2L4 14" stroke={NAVY} strokeWidth="1.4" /></Ic>,
  <BarMark key="mk" />,
  <FaStepBackward key="pv" size={15} color={NAVY} />,
  <FaStepForward key="nx" size={15} color={NAVY} />,
  <Ic key="d1"><path d="M4 14h9V3h-3M2 8l3-3v2h5v2H5v2z" fill="none" stroke={DIS} strokeWidth="1.400" /></Ic>,
  <Ic key="d2"><path d="M3 14h8v-4M14 7l-3-3v2H5v2h6v2z" fill={DIS} /></Ic>,
  <Ic key="add"><path d="M10 2h4v1.400h-2.600V14H10z" fill={NAVY} /><path d="M1 8h7M4.500 4.500v7" stroke="#2f9e44" strokeWidth="2" /></Ic>,
  <BarMark key="d3" dis />,
  <BarMark key="d4" dis />,
  <Ic key="d5"><path d="M9 2h5v1.400H10.400V14H9zM2 8h7" fill={DIS} stroke={DIS} strokeWidth=".8" /></Ic>,
  <FaTimes key="d6" size={16} color={DIS} />,
  <Ic key="d7"><path d="M2 3v10M14 3v10M3 8h10M5 6L3 8l2 2M11 6l2 2-2 2" stroke={DIS} strokeWidth="1.300" fill="none" /></Ic>,
];

/* ---------- code data ---------- */
const code = [
  [50, "h"], [51, "s", "sw=4'b", "0101"], [52, "h"], [53, "s", "sw=4'b", "0110"], [54, "h"], [55, "s", "sw=4'b", "0111"], [56, "h"],
  [57, "s", "sw=4'b", "1000", " //off"], [58, "h"], [59, "s", "sw=4'b", "1001"], [60, "h"], [61, "s", "sw =4'b", "1010"], [62, "h"],
  [63, "s", "sw =4'b", "1011"], [64, "h"],
];
const scopeCols = "166px 1fr";
const objects = [
  ["clk", 0, 0], ["rst", 0, 0], ["sw[3:0]", 1, 0], ["burst_count[3:0]", 1, 0], ["number_of_samples_logic_high[15:0]", 1, 1],
  ["JA1", 0, 1], ["polling_complete_flag_g", 0, 1], ["number_of_samples[15:0]", 1, 1], ["width_sig[14:0]", 1, 1], ["adjusted_counter_out[14:0]", 1, 1],
];
const signals = [
  ["clk", 0, 0, "0"], ["rst", 0, 0, "0"], ["sw[3:0]", 1, 0, "a"], ["burst_count[3:0]", 1, 0, "0"], ["number_of_sam...ic_high[15:0]", 1, 1, "0000"],
  ["JA1", 0, 1, "1"], ["polling_complete_flag_g", 0, 1, "1"], ["number_of_samples[15:0]", 1, 1, "0002"], ["width_sig[14:0]", 1, 1, "0800"], ["adjusted_counter_out[14:0]", 1, 1, "0000"],
];
const navData = [
  { t: "PROJECT MANAGER", b: 1, items: [["Settings", "gear"], ["Add Sources"], ["Language Templates"], ["IP Catalog", "ip"]] },
  { t: "IP INTEGRATOR", items: [["Create Block Design"], ["Open Block Design", null, 1], ["Generate Block Design", null, 1]] },
  { t: "SIMULATION", b: 1, a: 1, items: [["Run Simulation"]] },
  { t: "RTL ANALYSIS", items: [["Run Linter", "play"], ["Open Elaborated Design", "chev"]] },
  { t: "SYNTHESIS", items: [["Run Synthesis", "play"], ["Open Synthesized Design", "chev", 1]] },
  { t: "IMPLEMENTATION", items: [["Run Implementation", "play"]] },
];
const navIcon = (k) =>
  k === "gear" ? <Gear /> : k === "play" ? <Play s={15} /> : k === "chev" ? <Arrow c="#555" /> : k === "ip" ? (
    <Ic s={14}><path d="M3 2h8v7H3zM7 9v5M1 4h2M1 7h2M11 4h2M11 7h2" fill="none" stroke={NAVY} strokeWidth="1.3" /></Ic>
  ) : null;

/* ---------- waveform ---------- */
const G = "#00ff00";
const GL = "#14e014";
const DARK = "#064f06";
const T0 = 340.7;
const US = 155.4;
const END = 1895;
const tx = (u) => Math.round(T0 + u * US);
const rowTop = (i) => 893 + 19 * i;
const B = [341, 497, 652, 811, 966, 1122, 1278, 1433, 1588.5, 1745, 1895];

const Bus = ({ i, a, b, label, lx, sw = 1 }) => {
  const t = rowTop(i) + 0.5;
  const bt = t + 13;
  const m = t + 6.5;
  const s = Math.min(4, (b - a) / 2);
  return (
    <>
      <path d={`M${a} ${m}L${a + s} ${t}H${b - s}L${b} ${m}L${b - s} ${bt}H${a + s}Z`} fill="#000" stroke={GL} strokeWidth={sw} />
      {label && <WaveText x={lx ?? (a + b) / 2} y={t + 10.5} anchor="middle">{label}</WaveText>}
    </>
  );
};
const Solid = ({ i, a, b }) => <rect x={a} y={rowTop(i)} width={b - a} height={14} fill={G} />;
const WaveText = ({ x, y, anchor = "start", fill = "#fff", children }) => (
  <text x={x} y={y} textAnchor={anchor} fill={fill} fontFamily='"Liberation Mono", monospace' fontSize="11.500" style={{ whiteSpace: "pre" }}>{children}</text>
);
const Pulse = ({ a, b, fill }) => {
  const t = rowTop(5) + 0.5;
  return <rect x={a} y={t} width={b - a} height={13.5} fill={fill || "none"} stroke={GL} strokeWidth={1.5} />;
};
const Tick = ({ x }) => <rect x={x} y={rowTop(6)} width={2} height={14} fill={GL} />;

const range = (n) => Array.from({ length: n }, (_, k) => k);
const pollZoom6 = [146, 258, 370, 480, 536, 592, 648, 704, 760, 816, 872, 913, 955, 990, 1025, 1064, 1101, 1135, 1176, 1213, 1246, 1288, 1322];
const pollZoom7 = [277, 498, 722, 750, 944, 972, 1167, 1195, 1223, 1391, 1419, 1447];
const pollTicks = [
  ...pollZoom6.map((v) => 330 + v / 2.8),
  ...pollZoom7.map((v) => 880 + v / 2.8),
  ...range(30).map((k) => 1596.5 + k * 9.97),
];
const nsBlocks = [
  ["b", 812, 968.5, "0003", 890], ["s", 970, 980.5], ["b", 981, 1049.5, "0003", 1014], ["s", 1050, 1060], ["b", 1060, 1128.5, "0003", 1094],
  ["s", 1129, 1150], ["b", 1151, 1208.5, "0003", 1179], ["s", 1209, 1229], ["b", 1230, 1288.5, "0003", 1258], ["s", 1289, 1319],
  ["b", 1319, 1368, "0003", 1343], ["s", 1368, 1398], ["b", 1399, 1433, "0003", 1415], ["b", 1433, 1587.5, "0004", 1511], ["s", 1589, END],
];

const WaveForm = () => (
  <WaveSvg width="1561" height="1049" viewBox="337 833 1561 1049">
    {/* grid */}
    {range(10).map((u) => (
      <g key={u} shapeRendering="crispEdges">
        <path d={`M${tx(u) + 0.5} 889V1843`} stroke="#b4b4b4" />
        <path d={`M${tx(u) + 0.5} 869V889`} stroke="#fff" />
        <WaveText x={tx(u) + 2} y={876}>{`${u}.000000 us`}</WaveText>
      </g>
    ))}
    <g shapeRendering="crispEdges">
      {range(100).map((k) =>
        k % 10 === 0 ? null : (
          <path key={k} d={`M${Math.round(T0 + k * 15.54) + 0.5} ${k % 5 === 0 ? 884 : 885}V889`} stroke="#fff" />
        )
      )}
      <path d={`M341 889.5H${END}`} stroke="#fff" />
      <path d={`M341 1843.5H${END}`} stroke="#fff" />
    </g>

    <Solid i={0} a={341} b={END} />

    <path d={`M341 925.5H${END}`} stroke={GL} shapeRendering="crispEdges" />
    <rect x={808} y={912} width={2} height={13} fill={GL} />

    {range(10).map((k) => (
      <Bus key={k} i={2} a={B[k]} b={B[k + 1]} label={"123456789a"[k]} />
    ))}
    <Bus i={3} a={341} b={END} label="0" lx={1117.5} />

    {range(15).map((k) => (
      <Bus key={k} i={4} a={341 + k * 10.5} b={351.5 + k * 10.5} sw={2.6} />
    ))}
    <Solid i={4} a={498} b={812} />
    {nsBlocks.map(([kind, a, b, label, lx]) =>
      kind === "s" ? <Solid key={a} i={4} a={a} b={b} /> : <Bus key={a} i={4} a={a} b={b} label={label} lx={lx} />
    )}

    <path d={`M341 1001.5H${END}`} stroke={GL} shapeRendering="crispEdges" />
    {range(15).map((k) => <Pulse key={k} a={343 + k * 10} b={345.5 + k * 10} />)}
    {range(15).map((k) => <Pulse key={k} a={499 + k * 10} b={504 + k * 10} fill={DARK} />)}
    {range(16).map((k) => <Pulse key={k} a={650 + k * 10} b={657 + k * 10} fill={DARK} />)}
    {[[970, 981], [1050, 1061], [1129, 1150], [1209, 1230], [1289, 1319], [1368, 1399]].map(([a, b]) => (
      <Pulse key={a} a={a} b={b} fill={DARK} />
    ))}
    <rect x={1433} y={988} width={2} height={14} fill={GL} />
    <Pulse a={1589} b={END + 4} fill={DARK} />

    <path d={`M341 1020.5H${END}`} stroke={GL} shapeRendering="crispEdges" />
    {pollTicks.map((x) => <Tick key={x} x={x} />)}

    <Solid i={7} a={341} b={END} />

    {range(10).map((k) => (
      <Bus key={k} i={8} a={B[k]} b={B[k + 1]} label={["0008", "0010", "0018", "0000", "0020", "0040", "0060", "0000", "0400", "0800"][k]} />
    ))}

    <Solid i={9} a={341} b={812} />
    <Bus i={9} a={812} b={1588.5} label="0005" lx={1199.5} />
    <Bus i={9} a={1588.5} b={END} label="0000" lx={1741} />

    {/* cursor */}
    <rect x={1894} y={848} width={2} height={995} fill="#ffff00" />
    <rect x={1807} y={833} width={88} height={15} fill="#ffff00" stroke="#fff" />
    <WaveText x={1809} y={845} fill="#000">10.000000 us</WaveText>
  </WaveSvg>
);

const Marks = [["#f2d22e", 3], ["#ff0000", 4], ["#f2d22e", 6], ["#ff0000", 7], ["#f2d22e", 3], ["#ff0000", 5], ["#f2d22e", 3], ["#ff0000", 8], ["#f2d22e", 3], ["#ff0000", 3], ["#f2d22e", 6], ["#ff0000", 8], ["#f2d22e", 2]];

export default function App() {
  return (
    <Page>
      <Global />
      <TopWindow>
        <TitleBar>
          <AmdLogo s={20} />
          <TitleText>test_working_viv - [C:/COMPE475_Project/test_working_viv/test_working_viv.xpr] - Vivado 2023.2</TitleText>
          <WinControls>
            <WinBtn><svg width="12" height="12"><path d="M0 6h12" stroke="#888" /></svg></WinBtn>
            <WinBtn><svg width="12" height="14"><rect x="1" y="3" width="8" height="10" rx="1" fill="none" stroke="#888" /><path d="M3 3V1h8v9H9" fill="none" stroke="#888" /></svg></WinBtn>
            <WinBtn><X c="#777" s={13} w={.6} /></WinBtn>
          </WinControls>
        </TitleBar>
        <ChromeArea>
          <MenuRow>
            <MenuItem><u>F</u>ile</MenuItem>
            <MenuItem><u>E</u>dit</MenuItem>
            <MenuItem>F<u>l</u>ow</MenuItem>
            <MenuItem><u>T</u>ools</MenuItem>
            <MenuItem>Rep<u>o</u>rts</MenuItem>
            <MenuItem><u>W</u>indow</MenuItem>
            <MenuItem>La<u>y</u>out</MenuItem>
            <MenuItem><u>V</u>iew</MenuItem>
            <MenuItem><u>R</u>un</MenuItem>
            <MenuItem><u>H</u>elp</MenuItem>
            <QuickSearch>
              <QuickInner>
                <Ic s={13}><circle cx="6" cy="6" r="4.500" fill="none" stroke="#888" strokeWidth="1.300" /><path d="M9 9l4 4" stroke="#888" strokeWidth="1.300" /></Ic>
                <span>mulation Settings...</span>
                <svg width="12" height="12"><circle cx="6" cy="6" r="5" fill="#dcdcdc" /><path d="M4 4l4 4M8 4l-4 4" stroke="#fff" /></svg>
              </QuickInner>
            </QuickSearch>
            <ReadyText>Ready</ReadyText>
          </MenuRow>
          <ToolRow>
            {mainTools.map((t, k) => <ToolCell key={k} $line="#d4d4d4">{t}</ToolCell>)}
            <StepInput>1</StepInput>
            <UnitSelect>ns<Arrow dir="down" c="#333" s={11} /></UnitSelect>
            <ToolCell $line="#d4d4d4">
              <Ic><path d="M2 1h12v1.500H2zM6.500 4h3v4H12l-4 4-4-4h2.500zM2 13.500h12V15H2z" fill={NAVY} /></Ic>
            </ToolCell>
            <ToolCell $line="#d4d4d4"><svg width="12" height="16"><path d="M1 0h3v16H1zM8 0h3v16H8z" fill={DIS} /></svg></ToolCell>
            <ToolCell $line="#d4d4d4"><FaRedoAlt size={14} color={NAVY} /></ToolCell>
            <LayoutSelect>
              <Ic s={13}><path d="M1 2h5v4H1zM7 2h5v4H7zM1 7h11v4H1z" fill="#a6a6a6" /></Ic>
              <span>Default Layout</span>
              <PushRight><Arrow dir="down" c="#333" s={11} /></PushRight>
            </LayoutSelect>
          </ToolRow>
        </ChromeArea>

        <BodyRow>
          <FlowNav>
            <GreyHeader>
              Flow Navigator
              <HeaderTools>
                <HeaderTool><CollapseIc c="#ddd" /></HeaderTool>
                <HeaderTool><ExpandIc c="#ddd" /></HeaderTool>
                <HeaderTool>?</HeaderTool>
                <HeaderTool><svg width="12" height="10"><path d="M1 8.500h10" stroke="#ddd" strokeWidth="2" /></svg></HeaderTool>
              </HeaderTools>
            </GreyHeader>
            <NavBody>
              <NavList>
                {navData.map((s) => (
                  <NavSection key={s.t}>
                    <NavHead $bold={s.b} $active={s.a}>
                      <NavChev><Arrow dir="down" c="#222" /></NavChev>
                      {s.t}
                    </NavHead>
                    {s.items.map(([label, icon, off]) => (
                      <NavItem key={label} $off={off}>
                        <NavIcon>{navIcon(icon)}</NavIcon>
                        {label}
                      </NavItem>
                    ))}
                  </NavSection>
                ))}
              </NavList>
              <VStrip>
                <Arrow dir="up" />
                <Thumb $top={17} $h={433} />
                <Arrow dir="down" />
              </VStrip>
            </NavBody>
          </FlowNav>

          <MainPane>
            <BlueHeader>
              <b>SIMULATION</b>&nbsp;- Behavioral Simulation - Functional - sim_1 - pulse_generator_tb
              <HeaderRight>
                <TabTool>?</TabTool>
                <TabTool><X s={10} w={1.600} c="#888" /></TabTool>
              </HeaderRight>
            </BlueHeader>
            <Panes>
              <Panel>
                <TabStrip>
                  <Tab $w={78} $active>Scope<X /></Tab>
                  <Tab $w={70} $sep>Sources</Tab>
                  <TabTools $pr={3}><TabIcons help={false} /></TabTools>
                </TabStrip>
                <PanelTools>
                  <ToolCell><SearchIc /></ToolCell>
                  <ToolCell><CollapseIc /></ToolCell>
                  <ToolCell><ExpandIc /></ToolCell>
                  <RightGear><Gear /></RightGear>
                </PanelTools>
                <PanelBody>
                  <TableCol>
                    <TreeArea>
                      <TreeHead $cols={scopeCols}>
                        <HeadCell>Name</HeadCell>
                        <HeadCell>Design Unit</HeadCell>
                      </TreeHead>
                      <TreeRow $cols={scopeCols} $sel>
                        <NameCell $bold><Chev><Arrow dir="down" c="#888" /></Chev><TreeIcon><ModuleIc /></TreeIcon>pulse_generator_tb</NameCell>
                        <ValueCell>pulse_generator_tb</ValueCell>
                      </TreeRow>
                      <TreeRow $cols={scopeCols}>
                        <NameCell $indent={16}><Chev><Arrow c="#666" /></Chev><TreeIcon><ModuleIc /></TreeIcon>uut</NameCell>
                        <ValueCell>pulse_generator</ValueCell>
                      </TreeRow>
                      <TreeRow $cols={scopeCols}>
                        <NameCell><Chev /><TreeIcon><ModuleIc /></TreeIcon>glbl</NameCell>
                        <ValueCell>glbl</ValueCell>
                      </TreeRow>
                    </TreeArea>
                    <HScroll>
                      <Arrow dir="left" /><HThumb $w={170} $ml={5} /><PushRight><Arrow /></PushRight>
                    </HScroll>
                  </TableCol>
                  <VStrip $pad="5px 0 2px">
                    <Arrow dir="up" />
                    <Arrow dir="down" />
                  </VStrip>
                </PanelBody>
              </Panel>

              <Panel>
                <TabStrip>
                  <Tab $w={86} $active>Objects<X /></Tab>
                  <Tab $w={84} $sep>Protocol Inst</Tab>
                  <TabTools $pr={4}><TabIcons /></TabTools>
                </TabStrip>
                <PanelTools $pr={10}>
                  <ToolCell><SearchIc /></ToolCell>
                  <RightGear><Gear /></RightGear>
                </PanelTools>
                <PanelBody>
                  <TableCol>
                    <TreeArea>
                      <TreeHead $cols="1fr"><HeadCell>Name</HeadCell></TreeHead>
                      {objects.map(([n, bus, grey]) => (
                        <TreeRow key={n} $cols="1fr">
                          <NameCell><Chev>{bus ? <Arrow c="#666" /> : null}</Chev><TreeIcon><SigIc bus={bus} grey={grey} /></TreeIcon>{n}</NameCell>
                        </TreeRow>
                      ))}
                    </TreeArea>
                    <HScroll>
                      <Arrow dir="left" /><HThumb $w={137} $ml={5} /><PushRight><Arrow /></PushRight>
                    </HScroll>
                  </TableCol>
                  <VStrip $pad="5px 0 2px">
                    <Arrow dir="up" />
                    <Arrow dir="down" />
                  </VStrip>
                </PanelBody>
              </Panel>

              <Panel>
                <TabStrip>
                  <Tab $w={145}>pulse_generator.v<X /></Tab>
                  <Tab $w={163} $active>pulse_generator_tb.v<X /></Tab>
                  <Tab $w={130} $sep>clk_divider_tb.v<X /></Tab>
                  <TabTools $pr={5}><TabIcons min={false} /></TabTools>
                </TabStrip>
                <PathRow>
                  <PathText>C:/COMPE475_Project/test_working_viv/test_working_viv.srcs/sim_1/new/pulse_generator_tb.v</PathText>
                  <X c="#888" s={9} />
                </PathRow>
                <PanelTools $bb={3} $h={31} $pr={10}>
                  <ToolCell><SearchIc /></ToolCell>
                  <ToolCell><FaSave size={15} color={DIS} /></ToolCell>
                  <ToolCell><FaReply size={14} color={NAVY} /></ToolCell>
                  <ToolCell><FaShare size={14} color={DIS} /></ToolCell>
                  <ToolCell><FaCut size={14} color={NAVY} /></ToolCell>
                  <ToolCell><DocIc /></ToolCell>
                  <ToolCell><PasteIc /></ToolCell>
                  <ToolCell><FaTimes size={17} color="#e00000" /></ToolCell>
                  <ToolCell><SlashIc /></ToolCell>
                  <ToolCell><ColumnsIc /></ToolCell>
                  <ToolCell><FaRegLightbulb size={14} color={NAVY} /></ToolCell>
                  <RightGear><Gear /></RightGear>
                </PanelTools>
                <PanelBody>
                  <TableCol>
                    <CodeArea>
                      {code.map(([n, kind, pre, dig, tail]) => (
                        <CodeLine key={n}>
                          <LineNo>{n}</LineNo>
                          <BreakCol>{n < 64 && <BreakDot />}</BreakCol>
                          <CodeText>
                            {kind === "h" ? <><Hash>#</Hash>1000</> : <>{pre}<Digits>{dig}</Digits>;{tail && <Comment>{tail}</Comment>}</>}
                          </CodeText>
                        </CodeLine>
                      ))}
                    </CodeArea>
                    <HScroll $ml={76}>
                      <Arrow dir="left" /><HThumb $w={279} $ml={5} /><PushRight><Arrow /></PushRight>
                    </HScroll>
                  </TableCol>
                  <VStrip $pad="5px 0 13px">
                    <Arrow dir="up" />
                    <Thumb $top={143} $h={34} />
                    <Arrow dir="down" />
                  </VStrip>
                  <MarkerStrip $top={0}><Marker $c="#ff0000" $h={12} /></MarkerStrip>
                </PanelBody>
              </Panel>

              <Panel $span="1 / 4">
                <TabStrip>
                  <Tab $w={108} $active>Tcl Console<X /></Tab>
                  <Tab $w={80} $sep>Messages</Tab>
                  <Tab $w={44} $sep>Log</Tab>
                  <TabTools $pr={5}><TabIcons /></TabTools>
                </TabStrip>
                <PanelTools $bb={2} $h={31}>
                  <ToolCell><SearchIc /></ToolCell>
                  <ToolCell><CollapseIc /></ToolCell>
                  <ToolCell><ExpandIc /></ToolCell>
                  <ToolCell><FaPause size={15} color={NAVY} /></ToolCell>
                  <ToolCell><DocIc /></ToolCell>
                  <ToolCell><ColumnsIc /></ToolCell>
                  <ToolCell><FaTrashAlt size={13} color={NAVY} /></ToolCell>
                </PanelTools>
                <PanelBody>
                  <TableCol>
                    <ConsoleLines>
                      <FoldGutter><FoldMark /></FoldGutter>
                      <ConsoleText>
                        <ConsoleLine>INFO: [USF-XSim-96] XSim completed. Design snapshot 'pulse_generator_tb_behav' loaded.</ConsoleLine>
                        <ConsoleLine>INFO: [USF-XSim-97] XSim simulation ran for 10000ns</ConsoleLine>
                        <ConsoleLine>launch_simulation: Time (s): cpu = 00:00:01 ; elapsed = 00:00:05 . Memory (MB): peak = 2696.988 ; gain = 0.000</ConsoleLine>
                      </ConsoleText>
                    </ConsoleLines>
                    <HScroll $ml={25} $h={13}>
                      <Arrow dir="left" /><HThumb $w={509} $ml={5} /><PushRight><Arrow /></PushRight>
                    </HScroll>
                  </TableCol>
                  <VStrip $pad="5px 0 13px">
                    <Arrow dir="up" />
                    <Thumb $top={33} $h={34} />
                    <Arrow dir="down" />
                  </VStrip>
                  <MarkerStrip $top={10}>
                    {Marks.map(([c, h], k) => <Marker key={k} $c={c} $h={h} />)}
                  </MarkerStrip>
                </PanelBody>
                <TclInput>Type a Tcl command here</TclInput>
              </Panel>
            </Panes>
          </MainPane>
        </BodyRow>
        <StatusBar>Sim Time: 10 us</StatusBar>
      </TopWindow>

      <Taskbar $bg="#2a2320" $ml={274} $width={1360}>
        <TaskCell $w={56}><TaskIcon name="weather" /></TaskCell>
        <TaskCell $w={33.5} />
        <TaskApps apps={TOP_APPS} w={55} />
        <TaskSep $ml={5.5} />
        <ActiveCell $ml={5}><AmdLogo s={30} /><RunDot $w={20} $c="#aaa" /></ActiveCell>
        <TaskCell $w={60}><svg width="22" height="6"><circle cx="4" cy="3" r="2" fill="#eee" /><circle cx="11" cy="3" r="2" fill="#eee" /><circle cx="18" cy="3" r="2" fill="#eee" /></svg></TaskCell>
        <TaskSep $ml={2} />
        <Clock $w={103} $pr={29}><span>11:58 AM</span><span>12/1/2023</span></Clock>
      </Taskbar>

      <LowerFrame>
        <LowerWindow>
          <WaveTitle>
            Untitled 20
            <WaveWinTools>
              <TabTool><svg width="12" height="10"><path d="M1 8.500h10" stroke="#aaa" strokeWidth="2" /></svg></TabTool>
              <TabTool><svg width="11" height="11"><path d="M3 3V1h7v7H8M1 3h7v7H1z" fill="none" stroke="#999" strokeWidth="1.200" /></svg></TabTool>
              <TabTool><svg width="11" height="11"><path d="M6 1h4v4M10 1L5 6M1 6v4h4" fill="none" stroke="#888" strokeWidth="1.400" /></svg></TabTool>
              <TabTool><X c="#999" s={10} w={1.600} /></TabTool>
            </WaveWinTools>
          </WaveTitle>
          <WaveToolbar>
            {waveTools.map((t, k) => <ToolCell key={k}>{t}</ToolCell>)}
            <RightGear><Gear /></RightGear>
          </WaveToolbar>
          <WaveBody>
            <SignalCol $w={216}>
              <ColGap />
              <ColHead $pl={15}>Name</ColHead>
              <ColRows>
                {signals.map(([n, bus, grey]) => (
                  <SigRow key={n}>
                    <Chev>{bus ? <Arrow c="#aaa" /> : null}</Chev>
                    <SigIcon><SigIc bus={bus} grey={grey} /></SigIcon>
                    {n}
                  </SigRow>
                ))}
              </ColRows>
              <ColFoot $h={53} />
            </SignalCol>
            <SignalCol $w={106} $ml={4}>
              <ColGap />
              <ColHead $pl={15}>Value</ColHead>
              <ColRows>
                {signals.map(([n, , , v]) => <ValRow key={n}>{v}</ValRow>)}
              </ColRows>
              <ColFoot $h={38} />
              <ColScroll><Arrow dir="left" c="#777" /><Arrow c="#777" /></ColScroll>
            </SignalCol>
            <WaveCol>
              <WaveMain>
                <WaveForm />
                <VStrip $w={14} $bg="#fafafa" $pad="4px 0 1px">
                  <Arrow dir="up" c="#888" />
                  <Arrow dir="down" c="#888" />
                </VStrip>
              </WaveMain>
              <WaveScroll><Arrow dir="left" c="#777" /><Arrow c="#777" /></WaveScroll>
            </WaveCol>
          </WaveBody>
        </LowerWindow>
      </LowerFrame>

      <Taskbar $bg="#1e1e1e" $width={1920}>
        <TaskCell $w={56}><TaskIcon name="weather" /></TaskCell>
        <TaskCell $w={283.5} />
        <TaskApps apps={BOTTOM_APPS} w={55.1} />
        <ActiveCell $ml={5}><AmdLogo s={30} /><RunDot $w={20} $c="#aaa" /></ActiveCell>
        <TaskCell $w={58}><TaskIcon name="git" /><RunDot /></TaskCell>
        <TrayCell $w={40} $ml={12}><ChevronUp size={20} /></TrayCell>
        <TrayCell $w={40}>
          <svg width="24" height="24" viewBox="0 0 24 24"><circle cx="11" cy="11" r="7" fill="#9a9a9a" /><circle cx="6" cy="13" r="5" fill="#d4d4d4" /><circle cx="17" cy="17" r="6" fill="#d92c2c" /><path d="M15 15l4 4M19 15l-4 4" stroke="#fff" strokeWidth="1.400" /></svg>
        </TrayCell>
        <TrayCell $w={40}>
          <svg width="24" height="20" viewBox="0 0 24 20"><path d="M4 17a4 4 0 0 1 0-8 6 6 0 0 1 11-3 5 5 0 0 1 5 4 4 4 0 0 1 0 7z" fill="#1e90e8" /></svg>
        </TrayCell>
        <TrayCell $w={40}><Wifi size={21} /></TrayCell>
        <TrayCell $w={20}><Volume2 size={20} /></TrayCell>
        <TrayCell $w={40}>
          <svg width="22" height="20" viewBox="0 0 22 20"><rect x="3" y="6" width="17" height="10" rx="2" fill="none" stroke="#eee" strokeWidth="1.600" /><rect x="5" y="8" width="10" height="6" fill="#eee" /><path d="M9 1L6 7h3l-2 5 5-7H9z" fill="#eee" /></svg>
        </TrayCell>
        <Clock $w={82}><span>11:58 AM</span><span>12/1/2023</span></Clock>
        <TrayCell $w={34}><Bell size={20} /></TrayCell>
      </Taskbar>
    </Page>
  );
}
